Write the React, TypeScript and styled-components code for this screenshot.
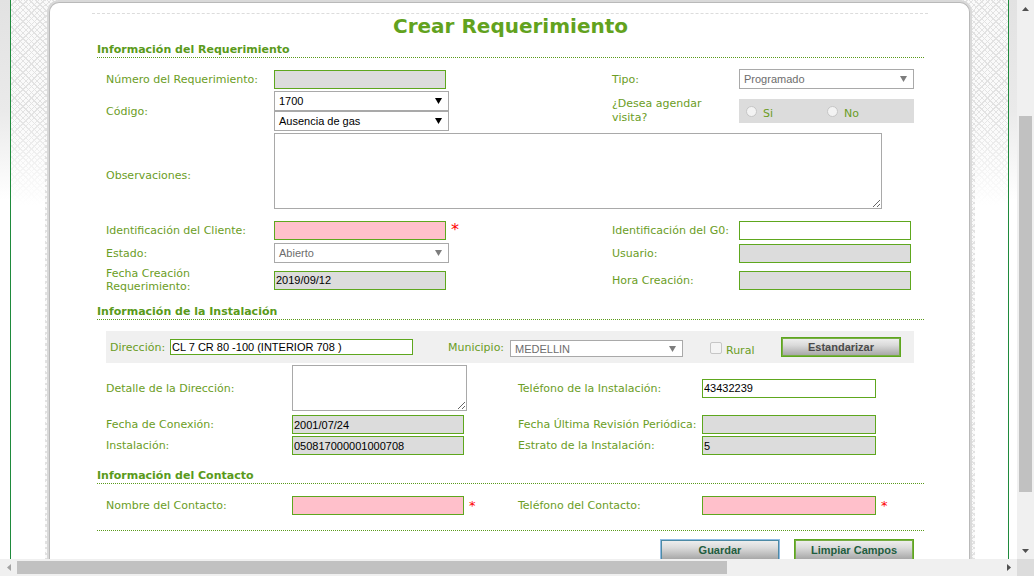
import React from "react";
import styled, { createGlobalStyle } from "styled-components";

const C = {
  title: "#62a21e",
  head: "#5a9a1a",
  label: "#6b9d25",
  fieldBorder: "#5ea71e",
  gray: "#dcdcdc",
  pink: "#ffc0cb",
  frameLine: "#1f8a3c",
};

const pattern = `repeating-linear-gradient(45deg, #e2e2e2 0 1px, transparent 1px 4px), repeating-linear-gradient(-45deg, #e2e2e2 0 1px, transparent 1px 4px)`;

const GlobalStyle = createGlobalStyle`
  html, body { margin: 0; padding: 0; width: 1034px; height: 576px; overflow: hidden; background: #fff; }
  #root { width: 1034px; height: 576px; }
  * { box-sizing: border-box; }
`;

const Screen = styled.div`
  display: grid;
  grid-template-columns: 1017px 17px;
  grid-template-rows: 559px 17px;
  width: 1034px;
  height: 576px;
  font-family: "DejaVu Sans", Verdana, sans-serif;
`;

const Viewport = styled.div`
  display: flex;
  overflow: hidden;
  min-width: 0;
  min-height: 0;
`;

const Gutter = styled.div<{ $w: number }>`
  flex: 0 0 ${(p) => p.$w}px;
  background: linear-gradient(to bottom, #e2e2e2 0, #eaeaea 110px, #fff 200px);
`;

const Frame = styled.div`
  flex: 1;
  display: flex;
  border-left: 1px solid ${C.frameLine};
  border-right: 1px solid ${C.frameLine};
  padding-left: 34px;
  background-color: #fafafa;
  background-image: linear-gradient(to bottom, rgba(255,255,255,0) 0, rgba(255,255,255,0) 110px, #fff 205px), ${pattern};
`;

const CardWrap = styled.div`
  flex: 0 0 930px;
  padding: 0 5px 0 4px;
  background-color: #fafafa;
  background-image: ${pattern};
`;

const Card = styled.div`
  margin-top: 2px;
  min-height: 620px;
  background: #fff;
  border: 1px solid #b9b9b9;
  border-bottom: none;
  border-radius: 10px 10px 0 0;
  box-shadow: 0 0 0 2px #d9d9d9;
  padding: 10px 45px 0 47px;
`;

const TopRule = styled.div`
  margin: 0 -4px 0 -5px;
  border-top: 1px dashed #dcdcdc;
`;

const Title = styled.h1`
  margin: 0;
  font: bold 20px/24px "DejaVu Sans", Verdana, sans-serif;
  color: ${C.title};
  text-align: center;
`;

const SectionHeader = styled.h2<{ $mt: number }>`
  margin: ${(p) => p.$mt}px 0 0;
  font: bold 11px/14px "DejaVu Sans", Verdana, sans-serif;
  color: ${C.head};
  border-bottom: 1px dotted ${C.head};
`;

const Row = styled.div<{ $cols: string; $h: number; $mt: number }>`
  display: grid;
  grid-template-columns: ${(p) => p.$cols};
  align-items: center;
  height: ${(p) => p.$h}px;
  margin-top: ${(p) => p.$mt}px;
  padding-left: 9px;
`;

const Label = styled.label<{ $lh?: number; $shift?: number }>`
  font-size: 11px;
  line-height: ${(p) => p.$lh ?? 13}px;
  color: ${C.label};
  white-space: nowrap;
  margin-top: ${(p) => p.$shift ?? 0}px;
`;

const FieldCell = styled.div<{ $span?: number; $top?: boolean }>`
  display: flex;
  align-items: center;
  grid-column: span ${(p) => p.$span ?? 1};
  align-self: ${(p) => (p.$top ? "start" : "center")};
`;

const TextInput = styled.input<{ $tone: "gray" | "pink" | "white"; $w: number; $h?: number }>`
  width: ${(p) => p.$w}px;
  height: ${(p) => p.$h ?? 19}px;
  margin: 0;
  padding: 0 1px;
  border: 1px solid ${C.fieldBorder};
  background: ${(p) => (p.$tone === "gray" ? C.gray : p.$tone === "pink" ? C.pink : "#fff")};
  font: 11px "Liberation Sans", Arial, sans-serif;
  color: #000;
  outline: none;
`;

const SelectBox = styled.div<{ $w: number; $h: number; $disabled?: boolean; $mt?: number }>`
  width: ${(p) => p.$w}px;
  height: ${(p) => p.$h}px;
  margin-top: ${(p) => p.$mt ?? 0}px;
  display: flex;
  align-items: center;
  justify-content: space-between;
  padding: 0 6px 0 4px;
  border: 1px solid #a9a9a9;
  background: #fff;
  font: 11px "Liberation Sans", Arial, sans-serif;
  color: ${(p) => (p.$disabled ? "#6d6d6d" : "#000")};
`;

const SelectStack = styled.div`
  display: flex;
  flex-direction: column;
`;

const TextArea = styled.textarea<{ $w: number; $h: number }>`
  display: block;
  width: ${(p) => p.$w}px;
  height: ${(p) => p.$h}px;
  margin: 0;
  padding: 2px;
  border: 1px solid #a9a9a9;
  background: #fff;
  resize: both;
  outline: none;
  font: 11px "Liberation Sans", Arial, sans-serif;
`;

const RadioPanel = styled.div`
  width: 175px;
  height: 24px;
  display: grid;
  grid-template-columns: 81px 1fr;
  align-items: center;
  padding-left: 7px;
  background: ${C.gray};
`;

const RadioOption = styled.span`
  display: flex;
  align-items: center;
  gap: 6px;
  font-size: 11px;
  line-height: 13px;
  color: ${C.label};
`;

const RadioText = styled.span`
  padding-top: 4px;
`;

const RadioDot = styled.span`
  width: 11px;
  height: 11px;
  border-radius: 50%;
  border: 1px solid #c6c6c6;
  background: #f3f3f3;
`;

const RequiredMark = styled.span<{ $size: number }>`
  margin-left: 5px;
  font: ${(p) => p.$size}px/1 "DejaVu Sans", sans-serif;
  color: #ff0000;
`;

const AddressBar = styled.div`
  display: flex;
  align-items: center;
  width: 808px;
  height: 32px;
  margin: 11px 0 0 9px;
  padding: 0 13px 0 4px;
  background: #f0f0f0;
`;

const BarLabel = styled.label<{ $w?: number; $ml?: number; $pt?: number }>`
  flex: 0 0 ${(p) => (p.$w ? `${p.$w}px` : "auto")};
  margin-left: ${(p) => p.$ml ?? 0}px;
  padding-top: ${(p) => p.$pt ?? 0}px;
  font-size: 11px;
  line-height: 13px;
  color: ${C.label};
  white-space: nowrap;
`;

const CheckBox = styled.span`
  flex: 0 0 12px;
  height: 12px;
  margin: 2px 0 0 27px;
  border: 1px solid #c6c6c6;
  border-radius: 2px;
  background: #f4f4f4;
`;

const Button = styled.button<{ $focus?: boolean; $h: number; $ink: string; $ml?: string }>`
  width: 120px;
  height: ${(p) => p.$h}px;
  margin: 0 0 0 ${(p) => p.$ml ?? "0"};
  padding: 0;
  font: bold 11px "Liberation Sans", Arial, sans-serif;
  color: ${(p) => p.$ink};
  background: linear-gradient(to bottom, #f0f0f0 0%, #dadada 40%, #a3a3a3 100%);
  border: 1px solid ${(p) => (p.$focus ? "#8fbbe3" : C.fieldBorder)};
  box-shadow: inset 0 0 0 1px ${(p) => (p.$focus ? "#4d8aa5" : "#78ad45")};
  cursor: pointer;
`;

const Separator = styled.div`
  margin-top: 15px;
  border-top: 1px dotted ${C.head};
`;

const ButtonBar = styled.div`
  display: flex;
  justify-content: flex-end;
  gap: 14px;
  margin-top: 8px;
  padding-right: 10px;
`;

const VScroll = styled.div`
  grid-column: 2;
  grid-row: 1;
  display: grid;
  grid-template-rows: 17px 1fr 17px;
  background: #f0f0f0;
`;

const HScroll = styled.div`
  grid-column: 1;
  grid-row: 2;
  display: grid;
  grid-template-columns: 17px 1fr 17px;
  background: #f0f0f0;
`;

const ArrowCell = styled.div`
  display: flex;
  align-items: center;
  justify-content: center;
`;

const VTrack = styled.div<{ $offset: number }>`
  display: flex;
  flex-direction: column;
  align-items: center;
  padding-top: ${(p) => p.$offset}px;
`;

const HTrack = styled.div<{ $offset: number }>`
  display: flex;
  align-items: center;
  padding-left: ${(p) => p.$offset}px;
`;

const Thumb = styled.div<{ $w: number; $h: number }>`
  flex: 0 0 auto;
  width: ${(p) => p.$w}px;
  height: ${(p) => p.$h}px;
  background: #c1c1c1;
`;

const Corner = styled.div`
  grid-column: 2;
  grid-row: 2;
  background: #dcdcdc;
`;

const Caret = ({ dim }: { dim?: boolean }) => (
  <svg width="7" height="6" viewBox="0 0 7 6">
    <polygon points="0,0 7,0 3.5,6" fill={dim ? "#7d7d7d" : "#000"} />
  </svg>
);

const Select = ({ value, w, h = 20, disabled, mt }: { value: string; w: number; h?: number; disabled?: boolean; mt?: number }) => (
  <SelectBox $w={w} $h={h} $disabled={disabled} $mt={mt}>
    <span>{value}</span>
    <Caret dim={disabled} />
  </SelectBox>
);

const Arrow = ({ dir, dim }: { dir: "up" | "down" | "left" | "right"; dim?: boolean }) => {
  const fill = dim ? "#a3a3a3" : "#505050";
  const pts = {
    up: "0,4 3.5,0 7,4",
    down: "0,0 7,0 3.5,4",
    left: "4,0 4,7 0,3.5",
    right: "0,0 4,3.5 0,7",
  }[dir];
  const vertical = dir === "up" || dir === "down";
  return (
    <svg width={vertical ? 7 : 4} height={vertical ? 4 : 7} viewBox={vertical ? "0 0 7 4" : "0 0 4 7"}>
      <polygon points={pts} fill={fill} />
    </svg>
  );
};

const COLS1 = "168px 338px 127px 1fr";
const COLS2 = "186px 226px 184px 1fr";

export default function App() {
  return (
    <>
      <GlobalStyle />
      <Screen>
        <Viewport>
          <Gutter $w={10} />
          <Frame>
            <CardWrap>
              <Card>
                <TopRule />
                <Title>Crear Requerimiento</Title>

                <SectionHeader $mt={5}>Información del Requerimiento</SectionHeader>
                <Row $cols={COLS1} $h={20} $mt={11}>
                  <Label>Número del Requerimiento:</Label>
                  <FieldCell><TextInput $tone="gray" $w={172} readOnly value="" /></FieldCell>
                  <Label>Tipo:</Label>
                  <FieldCell><Select value="Programado" w={175} disabled /></FieldCell>
                </Row>
                <Row $cols={COLS1} $h={40} $mt={2}>
                  <Label>Código:</Label>
                  <SelectStack>
                    <Select value="1700" w={175} />
                    <Select value="Ausencia de gas" w={175} />
                  </SelectStack>
                  <Label $lh={14}>¿Desea agendar<br />visita?</Label>
                  <RadioPanel>
                    <RadioOption><RadioDot /><RadioText>Si</RadioText></RadioOption>
                    <RadioOption><RadioDot /><RadioText>No</RadioText></RadioOption>
                  </RadioPanel>
                </Row>
                <Row $cols={COLS1} $h={80} $mt={2}>
                  <Label $shift={4}>Observaciones:</Label>
                  <FieldCell $span={3} $top><TextArea $w={608} $h={76} readOnly value="" /></FieldCell>
                </Row>
                <Row $cols={COLS1} $h={20} $mt={7}>
                  <Label>Identificación del Cliente:</Label>
                  <FieldCell>
                    <TextInput $tone="pink" $w={172} readOnly value="" />
                    <RequiredMark $size={16}>*</RequiredMark>
                  </FieldCell>
                  <Label>Identificación del G0:</Label>
                  <FieldCell><TextInput $tone="white" $w={172} readOnly value="" /></FieldCell>
                </Row>
                <Row $cols={COLS1} $h={20} $mt={3}>
                  <Label>Estado:</Label>
                  <FieldCell><Select value="Abierto" w={175} disabled /></FieldCell>
                  <Label>Usuario:</Label>
                  <FieldCell><TextInput $tone="gray" $w={172} readOnly value="" /></FieldCell>
                </Row>
                <Row $cols={COLS1} $h={21} $mt={4}>
                  <Label>Fecha Creación<br />Requerimiento:</Label>
                  <FieldCell><TextInput $tone="gray" $w={172} readOnly value="2019/09/12" /></FieldCell>
                  <Label>Hora Creación:</Label>
                  <FieldCell><TextInput $tone="gray" $w={172} readOnly value="" /></FieldCell>
                </Row>

                <SectionHeader $mt={17}>Información de la Instalación</SectionHeader>
                <AddressBar>
                  <BarLabel $w={60}>Dirección:</BarLabel>
                  <TextInput $tone="white" $w={243} $h={16} readOnly value="CL 7 CR 80 -100 (INTERIOR 708 )" />
                  <BarLabel $w={62} $ml={35}>Municipio:</BarLabel>
                  <Select value="MEDELLIN" w={173} h={17} mt={3} disabled />
                  <CheckBox />
                  <BarLabel $ml={4} $pt={6}>Rural</BarLabel>
                  <Button $h={20} $ink="#4a4a4a" $ml="auto">Estandarizar</Button>
                </AddressBar>
                <Row $cols={COLS2} $h={46} $mt={2}>
                  <Label>Detalle de la Dirección:</Label>
                  <FieldCell><TextArea $w={175} $h={46} readOnly value="" /></FieldCell>
                  <Label>Teléfono de la Instalación:</Label>
                  <FieldCell><TextInput $tone="white" $w={174} readOnly value="43432239" /></FieldCell>
                </Row>
                <Row $cols={COLS2} $h={19} $mt={4}>
                  <Label>Fecha de Conexión:</Label>
                  <FieldCell><TextInput $tone="gray" $w={172} readOnly value="2001/07/24" /></FieldCell>
                  <Label>Fecha Última Revisión Periódica:</Label>
                  <FieldCell><TextInput $tone="gray" $w={174} readOnly value="" /></FieldCell>
                </Row>
                <Row $cols={COLS2} $h={19} $mt={2}>
                  <Label>Instalación:</Label>
                  <FieldCell><TextInput $tone="gray" $w={172} readOnly value="050817000001000708" /></FieldCell>
                  <Label>Estrato de la Instalación:</Label>
                  <FieldCell><TextInput $tone="gray" $w={174} readOnly value="5" /></FieldCell>
                </Row>

                <SectionHeader $mt={14}>Información del Contacto</SectionHeader>
                <Row $cols={COLS2} $h={19} $mt={12}>
                  <Label>Nombre del Contacto:</Label>
                  <FieldCell>
                    <TextInput $tone="pink" $w={172} readOnly value="" />
                    <RequiredMark $size={13}>*</RequiredMark>
                  </FieldCell>
                  <Label>Teléfono del Contacto:</Label>
                  <FieldCell>
                    <TextInput $tone="pink" $w={174} readOnly value="" />
                    <RequiredMark $size={13}>*</RequiredMark>
                  </FieldCell>
                </Row>
                <Separator />
                <ButtonBar>
                  <Button $h={22} $ink="#1f5d3e" $focus>Guardar</Button>
                  <Button $h={22} $ink="#1f5d3e">Limpiar Campos</Button>
                </ButtonBar>
              </Card>
            </CardWrap>
          </Frame>
          <Gutter $w={8} />
        </Viewport>

        <VScroll>
          <ArrowCell><Arrow dir="up" /></ArrowCell>
          <VTrack $offset={99}><Thumb $w={13} $h={376} /></VTrack>
          <ArrowCell><Arrow dir="down" /></ArrowCell>
        </VScroll>
        <HScroll>
          <ArrowCell><Arrow dir="left" dim /></ArrowCell>
          <HTrack $offset={0}><Thumb $w={710} $h={13} /></HTrack>
          <ArrowCell><Arrow dir="right" /></ArrowCell>
        </HScroll>
        <Corner />
      </Screen>
    </>
  );
}
